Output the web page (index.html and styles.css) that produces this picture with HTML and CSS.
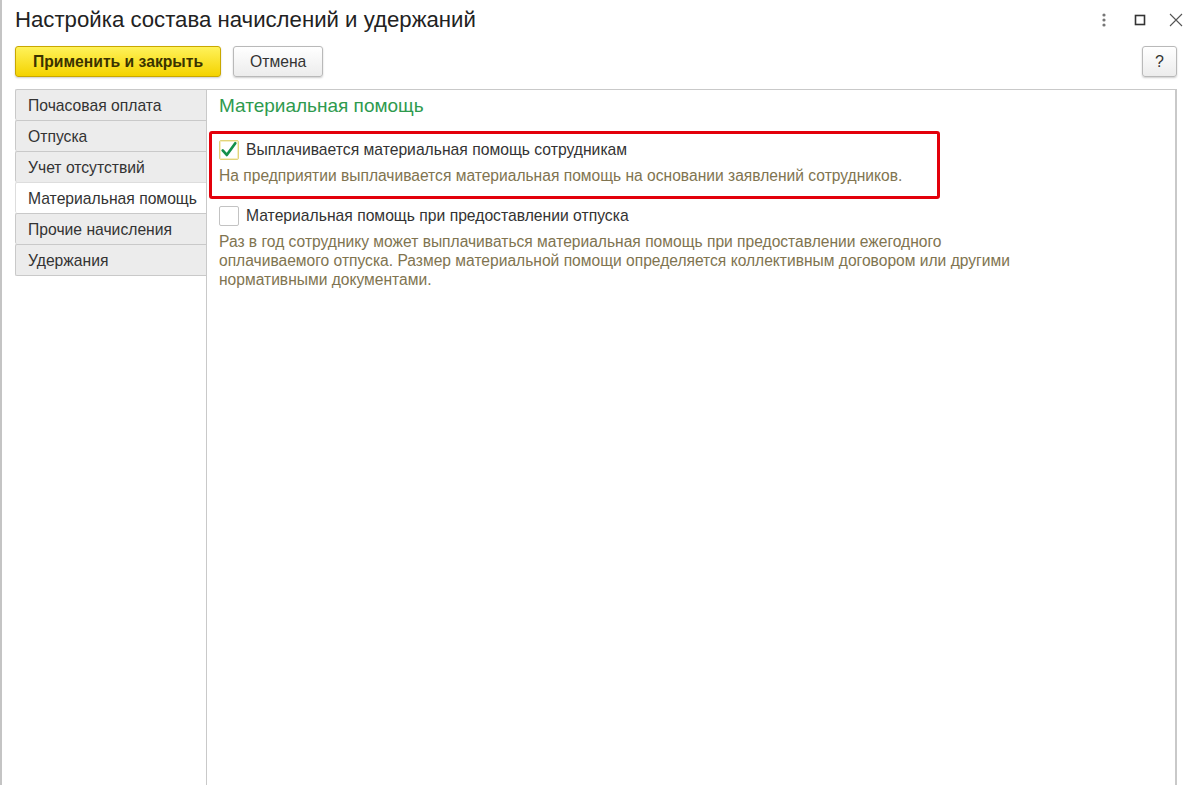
FILE: index.html
```html
<!DOCTYPE html>
<html lang="ru">

<head>
    <meta charset="utf-8">
    <meta name="viewport" content="width=device-width, initial-scale=1.0">
    <title>Настройка состава начислений и удержаний</title>

    <link rel="stylesheet" href="styles.css">
</head>

<body>
    <div class="okno">
        <header class="shapka">
            <h1>Настройка состава начислений и удержаний</h1>
            <div class="ikonki">
                <svg width="14" height="16" viewBox="0 0 14 16"><circle cx="7" cy="3" r="1.6" fill="#777"/><circle cx="7" cy="8" r="1.6" fill="#777"/><circle cx="7" cy="13" r="1.6" fill="#777"/></svg>
                <svg width="14" height="16" viewBox="0 0 14 16"><rect x="2.5" y="3.5" width="9" height="9" fill="none" stroke="#333" stroke-width="1.6"/></svg>
                <svg width="14" height="16" viewBox="0 0 14 16"><path d="M1 2 L13 14 M13 2 L1 14" stroke="#555" stroke-width="1.1"/></svg>
            </div>
        </header>

        <div class="panel_knopok">
            <button class="knopka glavnaya">Применить и закрыть</button>
            <button class="knopka">Отмена</button>
            <button class="knopka spravka">?</button>
        </div>

        <main class="soderzhimoe">
            <nav class="vkladki">
                <div class="vkladka">Почасовая оплата</div>
                <div class="vkladka">Отпуска</div>
                <div class="vkladka">Учет отсутствий</div>
                <div class="vkladka aktivnaya">Материальная помощь</div>
                <div class="vkladka">Прочие начисления</div>
                <div class="vkladka">Удержания</div>
            </nav>

            <section class="stranica">
                <h2>Материальная помощь</h2>

                <div class="gruppa vydelena">
                    <label class="flazhok">
                        <span class="kvadrat otmechen">
                            <svg width="20" height="20" viewBox="0 0 20 20"><path d="M3 10.5 L7.5 15.5 L17 2.5" fill="none" stroke="#14904a" stroke-width="3" stroke-linecap="round" stroke-linejoin="round"/></svg>
                        </span>
                        Выплачивается материальная помощь сотрудникам
                    </label>
                    <p class="poyasnenie">На предприятии выплачивается материальная помощь на основании заявлений сотрудников.</p>
                </div>

                <div class="gruppa">
                    <label class="flazhok">
                        <span class="kvadrat"></span>
                        Материальная помощь при предоставлении отпуска
                    </label>
                    <p class="poyasnenie">Раз в год сотруднику может выплачиваться материальная помощь при предоставлении ежегодного<br>оплачиваемого отпуска. Размер материальной помощи определяется коллективным договором или другими<br>нормативными документами.</p>
                </div>
            </section>
        </main>
    </div>
</body>

</html>
```

FILE: styles.css
```css
body {
    margin: 0;
    background-color: white;
    font-family: "Liberation Sans", Arial, sans-serif;
    color: #333333;
}

.okno {
    height: 785px;
    border-left: 2px solid #c4c4c4;
    display: flex;
    flex-direction: column;
    box-sizing: border-box;
    overflow: hidden;
}

.shapka {
    display: flex;
    align-items: center;
    justify-content: space-between;
    height: 40px;
    padding: 0 16px 0 13px;
}

h1 {
    margin: 0;
    font-size: 22.2px;
    font-weight: normal;
    color: #222222;
}

.ikonki {
    display: flex;
    gap: 22px;
    margin-right: 1px;
}

.panel_knopok {
    display: flex;
    gap: 12px;
    padding: 6px 23px 0 13px;
    height: 31px;
}

.knopka {
    font-family: inherit;
    font-size: 15.7px;
    color: #333333;
    height: 31px;
    padding: 0 16px;
    border: 1px solid #b9b9b9;
    border-radius: 3px;
    background: linear-gradient(#ffffff, #ececec);
    box-shadow: 0 1px 2px rgba(0, 0, 0, 0.2);
}

.glavnaya {
    width: 206px;
    font-weight: bold;
    color: #3a3300;
    border-color: #c9a800;
    background: linear-gradient(#fff25a, #f4d300);
}

.spravka {
    margin-left: auto;
    width: 35px;
    padding: 0;
    font-size: 16px;
}

.soderzhimoe {
    display: flex;
    flex: 1;
    margin: 12px 23px 0 13px;
}

.vkladki {
    width: 191px;
    display: flex;
    flex-direction: column;
}

.vkladka {
    height: 30px;
    line-height: 32px;
    padding-left: 12px;
    font-size: 15.7px;
    color: #333333;
    background-color: #ececec;
    border: 1px solid #c9c9c9;
    border-bottom: none;
    border-right: none;
    border-radius: 2px 0 0 2px;
}

.vkladka:last-child {
    border-bottom: 1px solid #c9c9c9;
}

.vkladka.aktivnaya {
    background-color: white;
    border-color: #dddddd;
}

.stranica {
    flex: 1;
    border: 1px solid #c9c9c9;
    border-right-width: 2px;
    border-bottom: none;
    padding: 0 0 0 2px;
}

h2 {
    margin: 5px 0 14px 10px;
    font-size: 19px;
    font-weight: normal;
    color: #2e9a4e;
}

.gruppa {
    padding: 6px 0 0 10px;
}

.gruppa.vydelena {
    width: 718px;
    height: 57px;
    border: 3px solid #e3000b;
    border-radius: 3px;
    padding: 5px 0 0 7px;
}

.flazhok {
    display: flex;
    align-items: center;
    gap: 7px;
    font-size: 15.7px;
    color: #333333;
    height: 22px;
}

.kvadrat {
    width: 18px;
    height: 18px;
    border: 1px solid #c3c3c3;
    border-radius: 2px;
    background-color: white;
    display: flex;
    align-items: center;
    justify-content: center;
}

.kvadrat.otmechen {
    border-color: #e2d47a;
    box-shadow: inset 0 0 0 1px #f6efc2;
}

.poyasnenie {
    margin: 5px 0 0 0;
    font-size: 15.6px;
    line-height: 19px;
    color: #807450;
}
```
